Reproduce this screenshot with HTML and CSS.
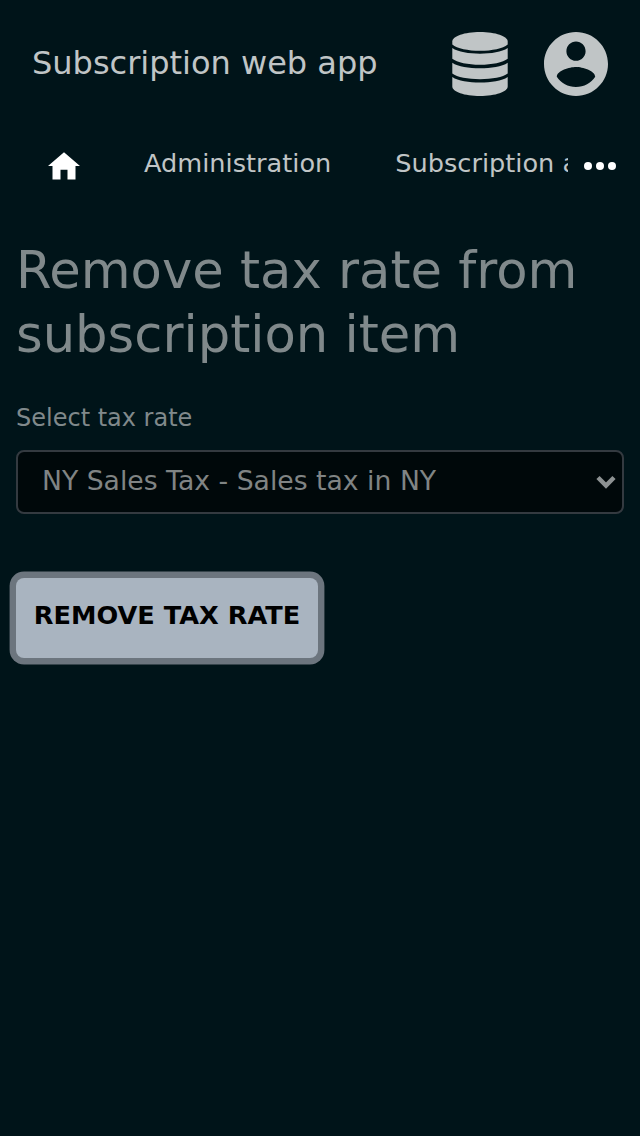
FILE: index.html
```html
<!DOCTYPE html>
<html lang="en">
<head>
<meta charset="utf-8">
<title>Subscription web app</title>
<link rel="stylesheet" href="styles.css">
</head>
<body>
<header class="topbar">
  <span class="brand">Subscription web app</span>
  <svg class="db" viewBox="0 0 56 64"><path d="M.3 9.500C.3 4.200 12.500 0 28 0s27.700 4.200 27.700 9.500v3C51 16.500 40 18.800 28 18.800S5 16.500.3 12.500z"/><path d="M.3 16C6 20 17 21.700 28 21.700S50 20 55.700 16v10.800C51 30.500 40 32.800 28 32.800S5 30.500.3 26.800z"/><path d="M.3 30.800C6 34.800 17 36.300 28 36.300s22-1.500 27.700-5.500v10.800C51 45.300 40 47.300 28 47.300S5 45.300.3 41.600z"/><path d="M.3 45C6 49 17 50.500 28 50.500S50 49 55.700 45v9.500C55.700 59.800 43.500 64 28 64S.3 59.800.3 54.500z"/></svg>
  <svg class="user" viewBox="2 2 20 20"><path d="M12 2C6.480 2 2 6.480 2 12s4.480 10 10 10 10-4.480 10-10S17.520 2 12 2zm0 3c1.660 0 3 1.340 3 3s-1.340 3-3 3-3-1.340-3-3 1.340-3 3-3zm0 14.200c-2.500 0-4.710-1.280-6-3.220.03-1.990 4-3.080 6-3.080 1.990 0 5.970 1.090 6 3.080-1.290 1.940-3.500 3.220-6 3.220z"/></svg>
</header>
<nav class="nav">
  <div class="items">
    <svg class="home" viewBox="0 0 32 28"><path d="M16 .2L0 14h4.500v13.600h8V17.700h7v9.900h8V14H32z"/></svg>
    <span class="admin">Administration</span>
    <span>Subscription app</span>
  </div>
  <svg class="more" viewBox="0 0 32 8"><circle cx="4" cy="4" r="4"/><circle cx="16" cy="4" r="4"/><circle cx="28" cy="4" r="4"/></svg>
</nav>
<main class="content">
  <h1 class="title">Remove tax rate from subscription item</h1>
  <label class="label">Select tax rate</label>
  <div class="select"><span>NY Sales Tax - Sales tax in NY</span><svg class="chevron" viewBox="0 0 20 14"><path d="M2 2.500l8 8 8-8"/></svg></div>
  <button class="remove">REMOVE TAX RATE</button>
</main>
</body>
</html>
```
FILE: styles.css
```css
* { box-sizing: border-box; }
body { margin: 0; min-height: 1136px; background: #001419; color: #c0c5c6; font-family: "DejaVu Sans", sans-serif; }
svg { display: block; flex: none; fill: currentColor; }
.topbar { display: flex; align-items: center; height: 128px; padding: 0 32px; }
.brand { flex: 1; font-size: 32px; line-height: 40px; padding-bottom: 2px; white-space: nowrap; }
.db { width: 56px; height: 64px; margin-right: 36px; }
.user { width: 64px; height: 64px; }
.nav { display: flex; align-items: center; height: 72px; }
.items { display: flex; align-items: center; width: 568px; padding: 0 0 2px 48px; overflow: hidden; white-space: nowrap; font-size: 25.600px; line-height: 40px; }
.home { width: 32px; height: 28px; margin-top: 6px; color: #fff; }
.admin { margin: 0 64px; }
.more { width: 32px; height: 8px; margin: 4px 0 0 16px; color: #fff; }
.content { padding: 38px 16px 0; color: #80898b; }
.title { margin: 0; font-size: 51.200px; line-height: 64px; font-weight: 400; }
.label { display: block; margin-top: 32px; font-size: 24px; line-height: 40px; }
.select { display: flex; align-items: center; justify-content: space-between; height: 64px; margin-top: 12px; padding: 0 6px 4px 24px; border: 2px solid #343a40; border-radius: 8px; background: #00080a; color: #808484; font-size: 26.670px; }
.chevron { width: 20px; height: 14px; margin-top: 3px; fill: none; stroke: #8d9293; stroke-width: 4.500px; }
.remove { display: block; height: 80px; width: 302px; margin: 64px 0 0; padding: 0 0 6px; border: 0; border-radius: 8px; background: #a9b4c0; box-shadow: 0 0 0 6.400px #6c757e; color: #000; font: bold 25.600px "DejaVu Sans", sans-serif; white-space: nowrap; }
```
